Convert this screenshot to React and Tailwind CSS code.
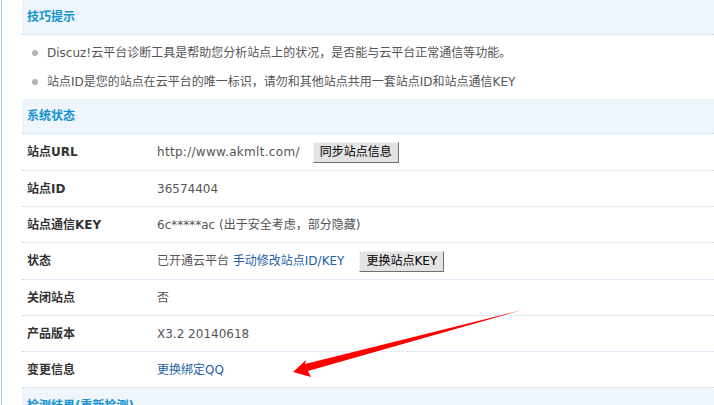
const FONT = "font-['DejaVu_Sans','Noto_Sans_CJK_SC',sans-serif]"

const ROWS = [
  { label: '站点URL', value: 'url', h: 'h-[37px]' },
  { label: '站点ID', value: '36574404', h: 'h-[36px]' },
  { label: '站点通信KEY', value: '6c*****ac (出于安全考虑，部分隐藏)', h: 'h-[36px]' },
  { label: '状态', value: 'status', h: 'h-[37px]' },
  { label: '关闭站点', value: '否', h: 'h-[36px]' },
  { label: '产品版本', value: 'X3.2 20140618', h: 'h-[36px]' },
  { label: '变更信息', value: 'qq', h: 'h-[36px]' },
]

function Header({ children, last }) {
  return (
    <div className={`h-[35px] flex items-center pl-[5px] bg-[#eef5fd] ${last ? '' : 'border-b border-dotted border-[#c3dcf2]'}`}>
      <span className="text-[12px] font-bold text-[#1593d0]">{children}</span>
    </div>
  )
}

function Btn({ children }) {
  return (
    <button className="h-[21px] px-[6px] text-[12px] leading-none text-black bg-[#e3e3e3] border border-t-[#f4f4f4] border-l-[#f4f4f4] border-r-[#6f6f6f] border-b-[#6f6f6f]">
      {children}
    </button>
  )
}

function Value({ kind }) {
  if (kind === 'url') {
    return (
      <div className="flex items-center gap-[13px]">
        <span className="tracking-[0.3px]">http://www.akmlt.com/</span>
        <Btn>同步站点信息</Btn>
      </div>
    )
  }
  if (kind === 'status') {
    return (
      <div className="flex items-center gap-[15px]">
        <span>
          已开通云平台 <span className="text-[#1e5fa8]">手动修改站点ID/KEY</span>
        </span>
        <Btn>更换站点KEY</Btn>
      </div>
    )
  }
  if (kind === 'qq') {
    return <span className="text-[#1e5fa8]">更换绑定QQ</span>
  }
  return <span>{kind}</span>
}

export default function App() {
  return (
    <div className={`relative w-[714px] h-[405px] overflow-hidden bg-white ${FONT} text-[12px]`}>
      <div className="flex h-full">
        <div className="w-[1px] ml-[1px] bg-[#a8cce2]" />
        <div className="flex-1 ml-[20px]">
          <Header>技巧提示</Header>
          <div className="h-[64px] flex flex-col justify-center gap-[11px] pl-[10px] text-[#555]">
            <div className="flex items-center gap-[9px]">
              <span className="w-[6px] h-[6px] rounded-full bg-[#b4b4b4]" />
              <span>Discuz!云平台诊断工具是帮助您分析站点上的状况，是否能与云平台正常通信等功能。</span>
            </div>
            <div className="flex items-center gap-[9px]">
              <span className="w-[6px] h-[6px] rounded-full bg-[#b4b4b4]" />
              <span>站点ID是您的站点在云平台的唯一标识，请勿和其他站点共用一套站点ID和站点通信KEY</span>
            </div>
          </div>
          <Header>系统状态</Header>
          {ROWS.map((r) => (
            <div
              key={r.label}
              className={`${r.h} flex items-center pl-[5px] border-b border-dotted border-[#c3dcf2]`}
            >
              <div className="w-[130px] font-bold text-[#333]">{r.label}</div>
              <div className="text-[#555]">
                <Value kind={r.value} />
              </div>
            </div>
          ))}
          <Header last>检测结果(重新检测)</Header>
        </div>
      </div>
      <svg className="absolute inset-0 pointer-events-none" width="714" height="405">
        <polygon
          points="293,372 306,360 305,364 522,310 308,371 311,377"
          fill="#ff0000"
        />
      </svg>
    </div>
  )
}
